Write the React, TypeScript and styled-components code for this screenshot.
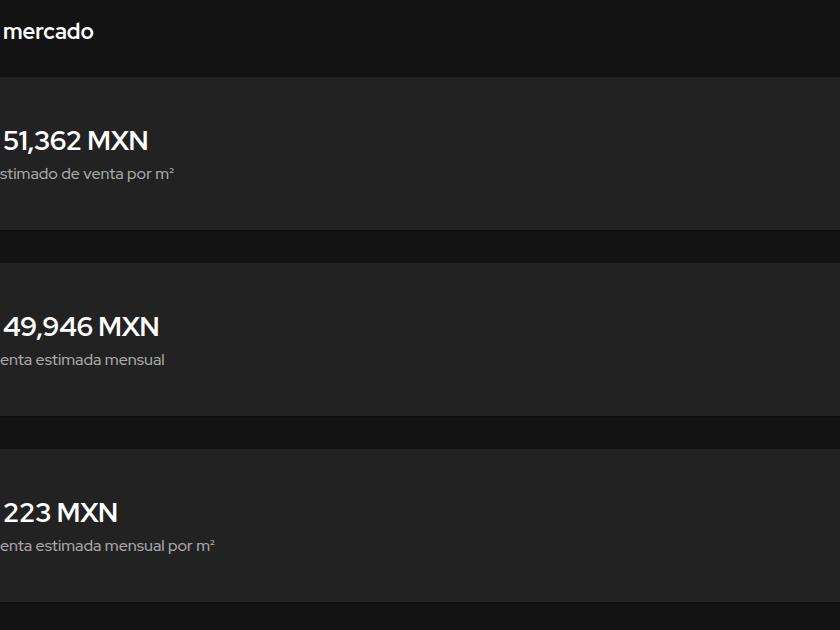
import React from "react";
import styled, { createGlobalStyle } from "styled-components";

const Global = createGlobalStyle`
  html, body { margin: 0; padding: 0; background: #131313; overflow: hidden; }
  body { font-family: "Red Hat Display", Lato, "Noto Sans", sans-serif; }
`;

const Page = styled.div`
  width: 840px;
  height: 630px;
  background: #131313;
  display: flex;
  flex-direction: column;
  overflow: hidden;
`;

const Header = styled.h2`
  margin: 0;
  height: 77px;
  display: flex;
  align-items: center;
  padding: 0 0 14px 3px;
  box-sizing: border-box;
  color: #ffffff;
  font-size: 22px;
  font-weight: 700;
`;

const List = styled.div`
  display: flex;
  flex-direction: column;
  gap: 33px;
`;

const Card = styled.div`
  height: 153px;
  background: #222222;
  box-shadow: 0 1px 2px rgba(0, 0, 0, 0.35);
  display: flex;
  flex-direction: column;
  justify-content: center;
  box-sizing: border-box;
  padding-top: 1px;
`;

const Value = styled.div`
  color: #ffffff;
  font-size: 27px;
  font-weight: 700;
  line-height: 34px;
  padding-left: 3px;
  letter-spacing: -0.1px;
`;

const Label = styled.div`
  color: #a8a8a8;
  font-size: 16px;
  font-weight: 500;
  line-height: 20px;
  margin-top: 6px;
`;

const items = [
  { value: "51,362 MXN", label: "stimado de venta por m²" },
  { value: "49,946 MXN", label: "enta estimada mensual" },
  { value: "223 MXN", label: "enta estimada mensual por m²" },
];

export default function App() {
  return (
    <Page>
      <Global />
      <Header>mercado</Header>
      <List>
        {items.map((it) => (
          <Card key={it.value}>
            <Value>{it.value}</Value>
            <Label>{it.label}</Label>
          </Card>
        ))}
      </List>
    </Page>
  );
}
